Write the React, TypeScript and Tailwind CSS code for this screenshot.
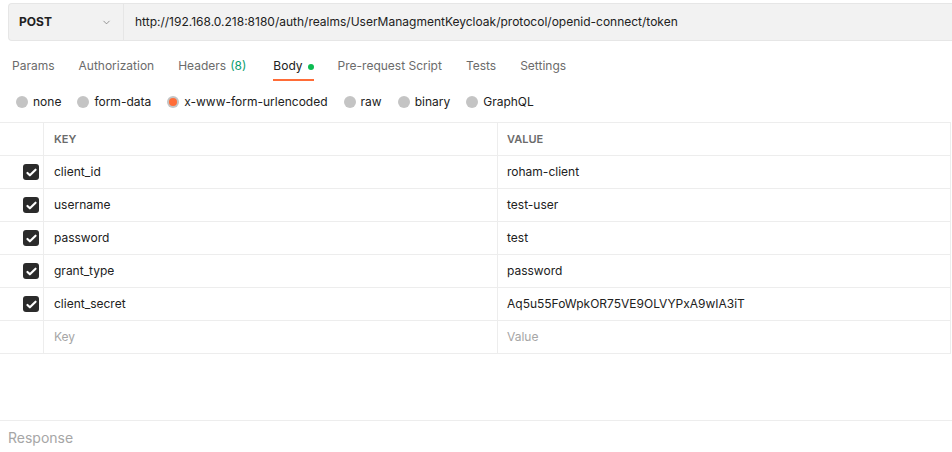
import { ChevronDown } from "lucide-react";

const tabs = [
  { label: "Params" },
  { label: "Authorization" },
  { label: "Headers", count: "(8)" },
  { label: "Body", active: true },
  { label: "Pre-request Script" },
  { label: "Tests" },
  { label: "Settings" },
];

const bodyTypes = ["none", "form-data", "x-www-form-urlencoded", "raw", "binary", "GraphQL"];

const params = [
  { key: "client_id", value: "roham-client" },
  { key: "username", value: "test-user" },
  { key: "password", value: "test" },
  { key: "grant_type", value: "password" },
  { key: "client_secret", value: "Aq5u55FoWpkOR75VE9OLVYPxA9wIA3iT" },
];

function Checkbox() {
  return (
    <div className="w-4 h-4 rounded-[3px] bg-[#2b2b2b] flex items-center justify-center">
      <svg viewBox="0 0 16 16" className="w-[13px] h-[13px]">
        <path d="M3 8.5l3 3 7-7" fill="none" stroke="white" strokeWidth="2.6" strokeLinecap="round" strokeLinejoin="round" />
      </svg>
    </div>
  );
}

export default function App() {
  return (
    <div
      className="w-[952px] h-[452px] bg-white flex flex-col overflow-hidden text-[#212121]"
      style={{ fontFamily: "Inter, 'Noto Sans', sans-serif" }}
    >
      {/* request bar */}
      <div className="mt-[3px] ml-[8px] h-[38px] flex bg-[#f2f2f2] border border-r-0 border-[#e6e6e6] rounded-l-[4px]">
        <div className="w-[115px] shrink-0 flex items-center justify-between pl-[10px] pr-[11px] border-r border-[#e6e6e6]">
          <span className="text-[12px] font-bold">POST</span>
          <ChevronDown className="w-[11px] h-[11px] text-[#6b6b6b]" strokeWidth={1.5} />
        </div>
        <div className="flex items-center pl-[11px] text-[12px] whitespace-nowrap">
          http://192.168.0.218:8180/auth/realms/UserManagmentKeycloak/protocol/openid-connect/token
        </div>
      </div>

      {/* tabs */}
      <div className="flex gap-[24px] pl-[12px] h-[41px] text-[12px]">
        {tabs.map((t) => (
          <div
            key={t.label}
            className={`relative flex items-start pt-[16px] leading-[18px] ${t.count ? "pr-[3px]" : ""}`}
          >
            <span className={t.active ? "text-[#212121]" : "text-[#6b6b6b]"}>{t.label}</span>
            {t.count && <span className="ml-[4px] text-[#0a9e6e]">{t.count}</span>}
            {t.active && <span className="ml-[5px] mt-[7px] w-[6px] h-[6px] rounded-full bg-[#0cbb52]" />}
            {t.active && <span className="absolute left-0 right-0 bottom-[1px] h-[2px] bg-[#ff6c37]" />}
          </div>
        ))}
      </div>

      {/* body types */}
      <div className="flex items-center h-[40px] pl-[16px] gap-[16px] text-[12px] pb-[1px]">
        {bodyTypes.map((b) => (
          <div key={b} className="flex items-center gap-[5px]">
            <span className="w-[12px] h-[12px] rounded-full bg-[#c4c4c4] flex items-center justify-center">
              {b === "x-www-form-urlencoded" && <span className="w-[8px] h-[8px] rounded-full bg-[#ff6c37]" />}
            </span>
            <span>{b}</span>
          </div>
        ))}
      </div>

      {/* table */}
      <div className="w-[951px] border-t border-r border-[#ededed] text-[12px]">
        <div className="flex h-[33px] border-b border-[#ededed]">
          <div className="w-[44px] border-r border-[#ededed]" />
          <div className="w-[454px] flex items-center pl-[10px] border-r border-[#ededed] text-[11px] font-semibold text-[#6b6b6b]">
            KEY
          </div>
          <div className="flex-1 flex items-center pl-[9px] text-[11px] font-semibold text-[#6b6b6b]">VALUE</div>
        </div>
        {params.map((p) => (
          <div key={p.key} className="flex h-[33px] border-b border-[#ededed]">
            <div className="w-[44px] border-r border-[#ededed] flex items-center justify-end pr-[4px]">
              <Checkbox />
            </div>
            <div className="w-[454px] flex items-center pl-[10px] border-r border-[#ededed]">{p.key}</div>
            <div className="flex-1 flex items-center pl-[9px]">{p.value}</div>
          </div>
        ))}
        <div className="flex h-[33px] border-b border-[#ededed] text-[#a6a6a6]">
          <div className="w-[44px] border-r border-[#ededed]" />
          <div className="w-[454px] flex items-center pl-[10px] border-r border-[#ededed]">Key</div>
          <div className="flex-1 flex items-center pl-[9px]">Value</div>
        </div>
      </div>

      <div className="flex-1" />

      {/* response */}
      <div className="h-[33px] border-t border-[#ededed] flex items-center pl-[8px] text-[14px] text-[#a6a6a6] mb-[-1px]">
        Response
      </div>
    </div>
  );
}
